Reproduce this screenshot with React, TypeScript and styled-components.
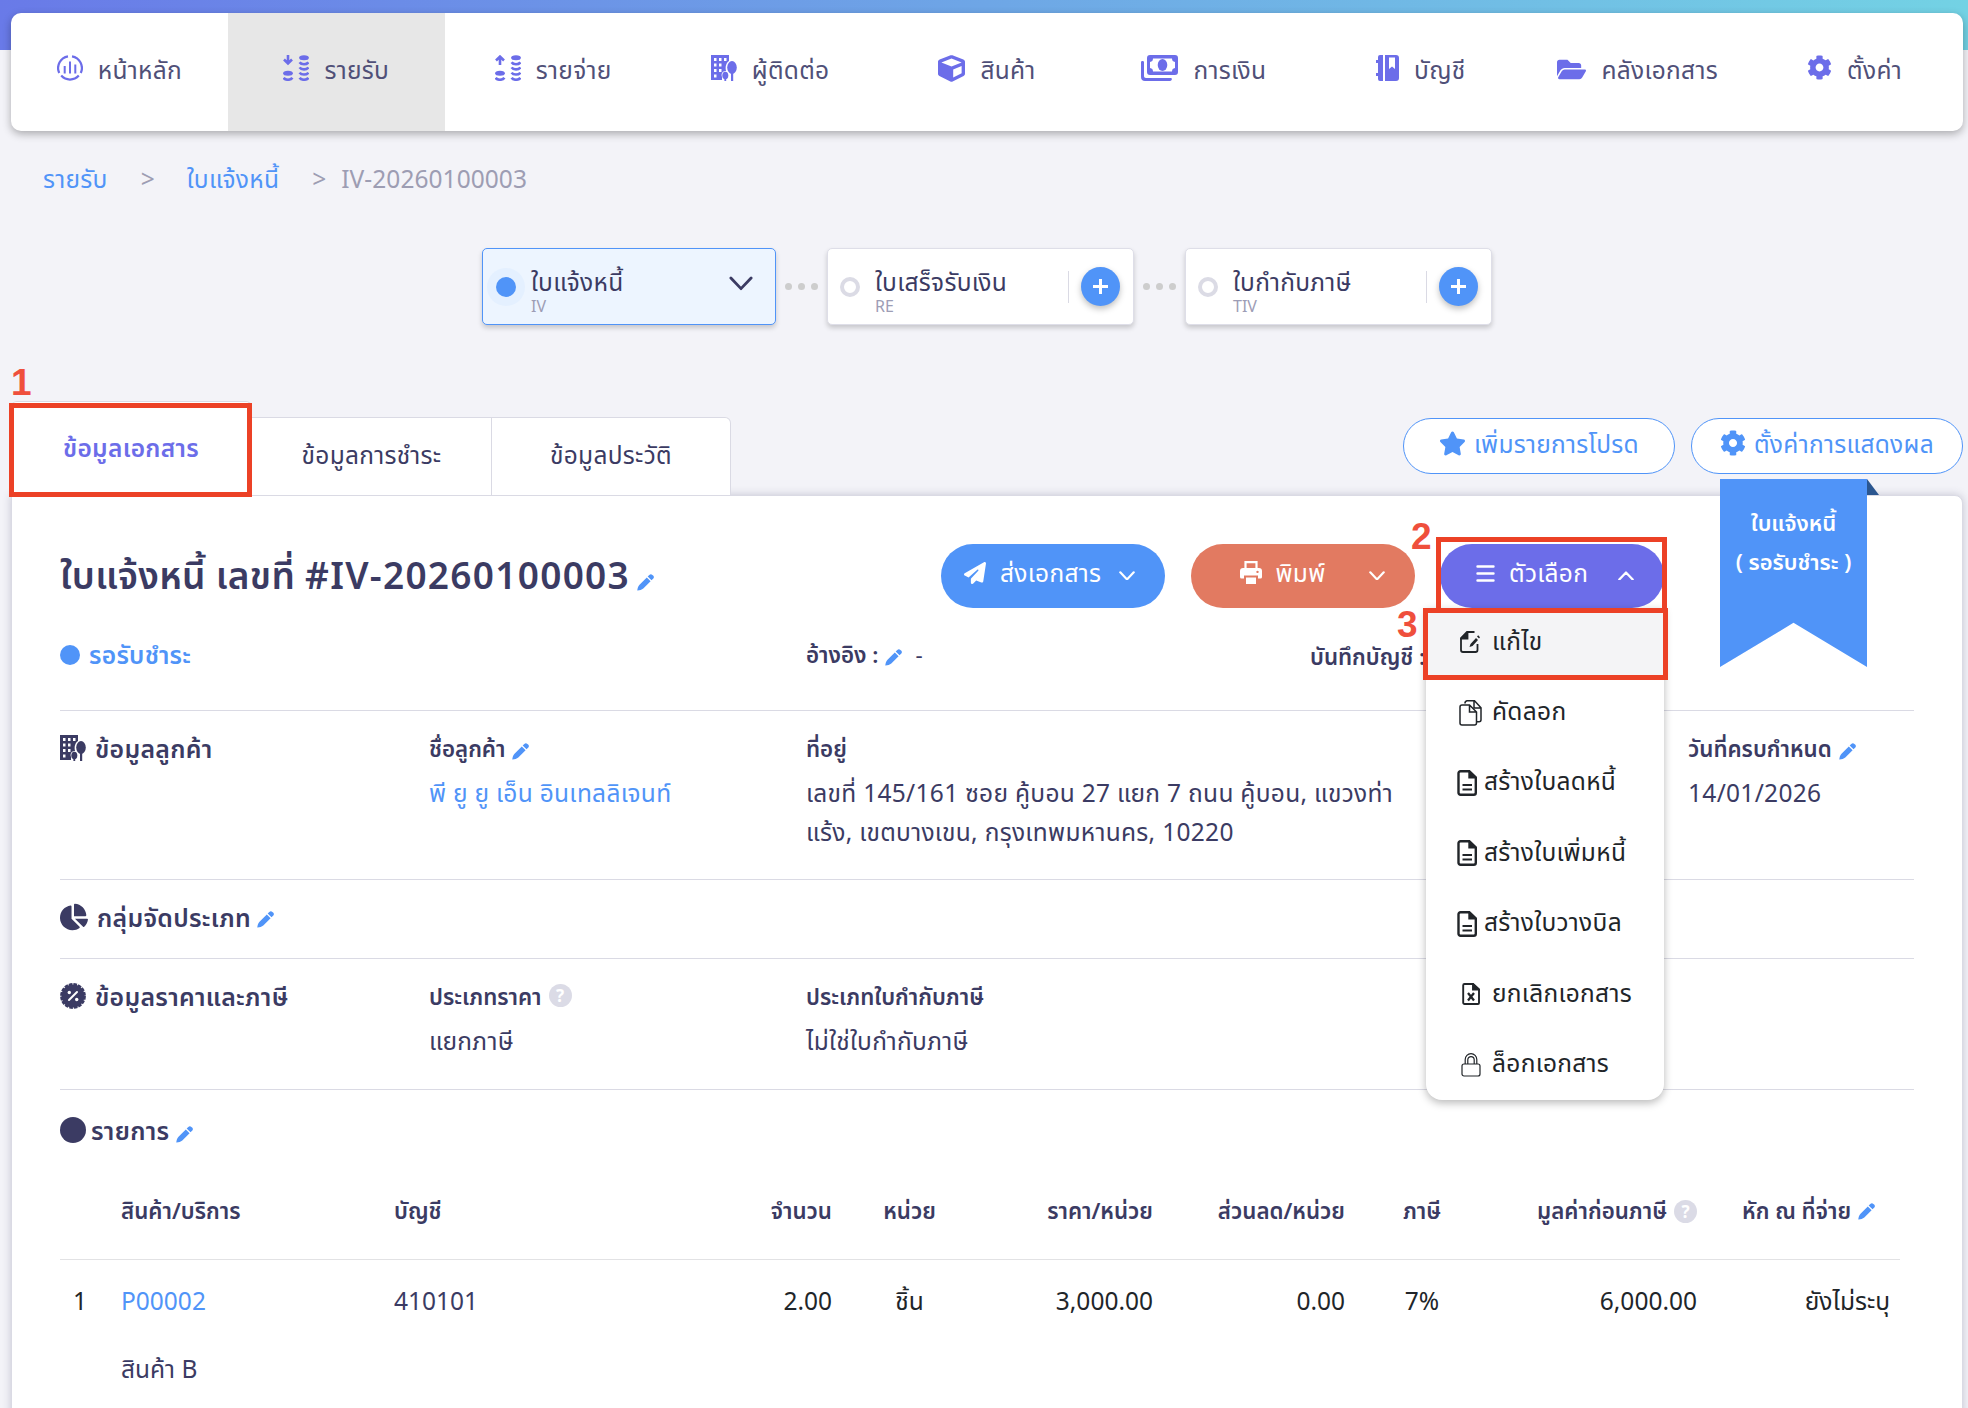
import React from 'react';
import styled, { createGlobalStyle } from 'styled-components';
import { FaChartPie, FaCog, FaCube, FaFolderOpen, FaStar } from 'react-icons/fa';
import { FaPaperPlane } from 'react-icons/fa6';

const NAVY = '#3b3b63';
const BLUE = '#5094f8';
const VIOLET = '#6c6de9';
const LINE = '#dadae4';
const RED = '#ec4126';

const DashboardIcon = () => (
  <svg width="26" height="26" viewBox="0 0 26 26" fill="none" stroke="currentColor" strokeWidth="2.2">
    <path d="M11 1.4A11.8 11.8 0 0 0 2.2 18M15 1.4A11.8 11.8 0 0 1 23.8 18M4.2 20.6a11.8 11.8 0 0 0 17.6 0" />
    <path d="M7.700 11v7.500M13 6.500V18.500M18.300 9.500V18.500" strokeWidth="2" />
  </svg>
);

const CoinsIcon = ({ up }: { up?: boolean }) => (
  <svg width="26" height="26" viewBox="0 0 26 26" fill="currentColor">
    <path
      d="M5 0v7M1 4.500 5 8.400 9 4.500"
      transform={up ? 'rotate(180 5 5)' : undefined}
      fill="none"
      stroke="currentColor"
      strokeWidth="2.6"
    />
    <ellipse cx="5" cy="18.2" rx="4.9" ry="2.5" />
    <ellipse cx="21" cy="2.8" rx="4.9" ry="2.5" />
    <path
      d="M.6 22.800c1.700 2.600 7.100 2.600 8.800 0M16.600 7.300c1.700 2.600 7.100 2.600 8.800 0M16.600 12.400c1.700 2.600 7.100 2.600 8.800 0M16.600 17.600c1.700 2.600 7.100 2.600 8.800 0M16.600 22.800c1.700 2.600 7.100 2.600 8.800 0"
      fill="none"
      stroke="currentColor"
      strokeWidth="2.6"
    />
  </svg>
);

const BuildingIcon = () => (
  <svg width="26" height="26" viewBox="0 0 26 26" fill="currentColor">
    <path
      fillRule="evenodd"
      d="M0 0h18v6c-3 2-4 6-3 10-4 0-5 3-4 6v3H0zM3 3v3h2.500V3zM8 3v3h2.500V3zM13 3v3h2.500V3zM3 8.500v3h2.500v-3zM8 8.500v3h2.500v-3zM3 14v3h2.500v-3zM8 14v3h2.500v-3zM3 19.500v3h2.500v-3z"
    />
    <ellipse cx="21" cy="12.5" rx="4.8" ry="6.5" />
    <ellipse cx="14.3" cy="20.5" rx="3" ry="3.8" />
    <path d="M20 17h2.200v9H20zM13.400 22h1.800v4h-1.800z" />
  </svg>
);

const MoneyIcon = () => (
  <svg width="37" height="26" viewBox="0 0 37 26" fill="currentColor">
    <path
      fillRule="evenodd"
      d="M9 0h25a3 3 0 0 1 3 3v14a3 3 0 0 1-3 3H9a3 3 0 0 1-3-3V3a3 3 0 0 1 3-3zM12 3.500a3.500 3.500 0 0 1-3 3.500v6a3.500 3.500 0 0 1 3 3.500h19a3.500 3.500 0 0 1 3-3.500V7a3.500 3.500 0 0 1-3-3.500z"
    />
    <ellipse cx="21.5" cy="10" rx="4.8" ry="6" />
    <path d="M0 7c0-1.500 3-1.500 3 0v14c0 1.300.8 2 2 2h25c1.500 0 1 3-1 3H4c-2.500 0-4-1.500-4-4z" />
  </svg>
);

const LedgerIcon = () => (
  <svg width="23" height="26" viewBox="0 0 23 26" fill="currentColor">
    <path d="M4 0h3v26H4a2 2 0 0 1-2-2v-3H0v-3h2V8H0V5h2V2a2 2 0 0 1 2-2z" />
    <path fillRule="evenodd" d="M9 0h11a3 3 0 0 1 3 3v20a3 3 0 0 1-3 3H9zm4 2.500V14l3-2.500 3 2.500V2.500z" />
  </svg>
);

const PercentIcon = () => (
  <svg width="26" height="26" viewBox="0 0 26 26" fill="currentColor">
    <circle cx="13" cy="13" r="11.5" />
    <circle cx="13" cy="13" r="11.7" fill="none" stroke="currentColor" strokeWidth="2.4" strokeDasharray="3.6 1" />
    <path d="M9 17 17 9" stroke="#fff" strokeWidth="2" strokeLinecap="round" />
    <circle cx="9.3" cy="9.5" r="1.7" fill="#fff" />
    <circle cx="16.7" cy="16.5" r="1.7" fill="#fff" />
  </svg>
);

const PrintIcon = () => (
  <svg width="22" height="24" viewBox="0 0 22 24" fill="currentColor">
    <path d="M5.500 8V1.200h11V8" fill="none" stroke="currentColor" strokeWidth="2.2" />
    <path
      fillRule="evenodd"
      d="M3 7h16a3 3 0 0 1 3 3v6a1.500 1.500 0 0 1-1.500 1.500H18V14.500H4v3H1.500A1.500 1.500 0 0 1 0 16v-6a3 3 0 0 1 3-3zm14.500 2.700a1.200 1.200 0 1 0 .01 0z"
    />
    <path d="M6 16.500h10V23H6z" />
  </svg>
);

const EditIcon = () => (
  <svg width="21" height="22" viewBox="0 0 21 22" fill="none" stroke="currentColor" strokeWidth="1.8">
    <path d="M14.500 1H7L1 7v12a2 2 0 0 0 2 2h12.500a2 2 0 0 0 2-2v-6" />
    <path d="M1.500 7.500H7.500V1.500z" fill="currentColor" />
    <path d="M9.500 16l1-3 5.500-6 2 2-5.500 6zM17 5.500l1.200-1.200 1.800 2L19 7.500z" fill="currentColor" stroke="none" />
  </svg>
);

const CopyIcon = () => (
  <svg width="23" height="26" viewBox="0 0 23 26" fill="none" stroke="currentColor" strokeWidth="1.5">
    <path d="M6 3.500a2.500 2.500 0 0 1 2-2.700h7.500l6.500 7v12a2 2 0 0 1-2 2h-2.500M15 1v7h7" />
    <path d="M3 5h7.500l7 7v11a2 2 0 0 1-2 2H3a2 2 0 0 1-2-2V7a2 2 0 0 1 2-2zM10.500 5v7H17.500" />
  </svg>
);

const FileIcon = () => (
  <svg width="20" height="26" viewBox="0 0 20 26" fill="none" stroke="currentColor" strokeWidth="2.4">
    <path d="M3.500 1.200H12l6.800 6.500v15.100a2 2 0 0 1-2 2H3.500a2 2 0 0 1-2-2V3.200a2 2 0 0 1 2-2z" />
    <path d="M12.500 1.500v5.700h6z" fill="currentColor" />
    <path d="M5.500 15h9.500M5.500 19.500h9.500" strokeWidth="2" />
  </svg>
);

const CancelIcon = () => (
  <svg width="18" height="22" viewBox="0 0 18 22" fill="none" stroke="currentColor" strokeWidth="1.9">
    <path d="M2.500 1H11l6 5.500V20a1 1 0 0 1-1 1H2.500a1.300 1.300 0 0 1-1.300-1.300V2.300A1.300 1.300 0 0 1 2.500 1z" />
    <path d="M11 1v5.500h6z" fill="currentColor" />
    <path d="m6 10 6 7.500M12 10l-6 7.500" strokeWidth="2.3" />
  </svg>
);

const LockIcon = () => (
  <svg width="20" height="24" viewBox="0 0 20 24" fill="none" stroke="currentColor" strokeWidth="1.2">
    <rect x="1" y="11" width="18" height="12" rx="2" />
    <path d="M4.200 11V6.500a5.800 5.800 0 0 1 11.600 0V11M6.800 11V6.800a3.200 3.200 0 0 1 6.400 0V11" />
  </svg>
);

const BarsIcon = () => (
  <svg width="19" height="17" viewBox="0 0 19 17" stroke="currentColor" strokeWidth="2.4" strokeLinecap="round">
    <path d="M1.500 1.500h16M1.500 8.500h16M1.500 15.500h16" />
  </svg>
);

const Pencil = () => (
  <svg className="pencil" width="17" height="17" viewBox="0 0 17 17" fill={BLUE}>
    <path d="M9.800 3.400l3.800 3.800-7.300 7.300c-1.500 1.300-3.600 1.800-5.700 2.100-.3 0-.4-.1-.3-.4.3-2 .8-4.100 2.200-5.500z" />
    <path d="M10.700 2.500 12.300.9a2.200 2.200 0 0 1 3.100 0l.7.7a2.200 2.200 0 0 1 0 3.100l-1.600 1.600z" />
  </svg>
);

const Chevron = ({ w = 16, up, thick = 2.2 }: { w?: number; up?: boolean; thick?: number }) => (
  <svg
    width={w}
    height={w * 0.62}
    viewBox="0 0 16 10"
    fill="none"
    stroke="currentColor"
    strokeWidth={thick}
    strokeLinecap="round"
    strokeLinejoin="round"
  >
    <path d={up ? 'M1.200 8.700 8 1.500l6.800 7.200' : 'M1.200 1.300 8 8.500l6.800-7.200'} />
  </svg>
);

const navItems = [
  { label: 'หน้าหลัก', icon: <DashboardIcon /> },
  { label: 'รายรับ', icon: <CoinsIcon />, active: true },
  { label: 'รายจ่าย', icon: <CoinsIcon up /> },
  { label: 'ผู้ติดต่อ', icon: <BuildingIcon /> },
  { label: 'สินค้า', icon: <FaCube size={27} /> },
  { label: 'การเงิน', icon: <MoneyIcon /> },
  { label: 'บัญชี', icon: <LedgerIcon /> },
  { label: 'คลังเอกสาร', icon: <FaFolderOpen size={29} /> },
  { label: 'ตั้งค่า', icon: <FaCog size={25} /> },
];

const menuItems = [
  { label: 'แก้ไข', icon: <EditIcon />, active: true },
  { label: 'คัดลอก', icon: <CopyIcon /> },
  { label: 'สร้างใบลดหนี้', icon: <FileIcon />, tight: true },
  { label: 'สร้างใบเพิ่มหนี้', icon: <FileIcon />, tight: true },
  { label: 'สร้างใบวางบิล', icon: <FileIcon />, tight: true },
  { label: 'ยกเลิกเอกสาร', icon: <CancelIcon /> },
  { label: 'ล็อกเอกสาร', icon: <LockIcon /> },
];

const steps = [
  { label: 'ใบเสร็จรับเงิน', code: 'RE' },
  { label: 'ใบกำกับภาษี', code: 'TIV' },
];

function App() {
  return (
    <Page>
      <GlobalStyle />
      <Nav>
        {navItems.map((item) => (
          <NavItem key={item.label} $active={item.active}>
            {item.icon}
            <span>{item.label}</span>
          </NavItem>
        ))}
      </Nav>

      <Breadcrumb>
        <Link>รายรับ</Link>
        <Arrow>&gt;</Arrow>
        <Link>ใบแจ้งหนี้</Link>
        <Arrow $last>&gt;</Arrow>
        <Current>IV-20260100003</Current>
      </Breadcrumb>

      <Steps>
        <Step $active>
          <Radio $active />
          <StepText>
            ใบแจ้งหนี้
            <small>IV</small>
          </StepText>
          <StepChevron>
            <Chevron w={24} thick={1.9} />
          </StepChevron>
        </Step>
        {steps.map((step) => (
          <React.Fragment key={step.code}>
            <Dots>
              <i />
              <i />
              <i />
            </Dots>
            <Step>
              <Radio />
              <StepText>
                {step.label}
                <small>{step.code}</small>
              </StepText>
              <AddBox>
                <AddButton />
              </AddBox>
            </Step>
          </React.Fragment>
        ))}
      </Steps>

      <TabBar>
        <Tab $active>
          ข้อมูลเอกสาร
          <Frame $x={-2} $y={1} $w={243} $h={94} />
          <Mark $x={0} $y={-36}>
            1
          </Mark>
        </Tab>
        <Tab>ข้อมูลการชำระ</Tab>
        <Tab $end>ข้อมูลประวัติ</Tab>
        <TabActions>
          <OutlineButton>
            <FaStar size={27} />
            <span>เพิ่มรายการโปรด</span>
          </OutlineButton>
          <OutlineButton>
            <FaCog size={26} />
            <span>ตั้งค่าการแสดงผล</span>
          </OutlineButton>
        </TabActions>
      </TabBar>

      <Panel>
        <Ribbon>
          ใบแจ้งหนี้
          <br />( รอรับชำระ )
        </Ribbon>
        <RibbonFold />
        <Head>
          <Title>
            ใบแจ้งหนี้ เลขที่ <span>#IV-20260100003</span>
          </Title>
          <Pencil />
          <Actions>
            <ActionButton $color={BLUE}>
              <FaPaperPlane size={22} />
              <span>ส่งเอกสาร</span>
              <Chevron />
            </ActionButton>
            <ActionButton $color="#e27a61" $spread>
              <PrintIcon />
              <span>พิมพ์</span>
              <Chevron />
            </ActionButton>
            <MenuHost>
              <ActionButton $color={VIOLET} $menu>
                <BarsIcon />
                <span>ตัวเลือก</span>
                <Chevron up />
              </ActionButton>
              <Menu>
                {menuItems.map((item) => (
                  <MenuItem key={item.label} $active={item.active} $tight={item.tight}>
                    <MenuIcon $tight={item.tight}>{item.icon}</MenuIcon>
                    {item.label}
                  </MenuItem>
                ))}
              </Menu>
              <Frame $x={-4} $y={-7} $w={231} $h={76} />
              <Frame $x={-17} $y={64} $w={245} $h={72} />
              <Mark $x={-29} $y={-24}>
                2
              </Mark>
              <Mark $x={-43} $y={64}>
                3
              </Mark>
            </MenuHost>
          </Actions>
        </Head>

        <StatusRow>
          <Status>รอรับชำระ</Status>
          <Label>
            อ้างอิง : <Pencil />
            <Dash>-</Dash>
          </Label>
          <Label $low>บันทึกบัญชี :</Label>
        </StatusRow>

        <Section $height={169}>
          <SectionTitle>
            <BuildingIcon />
            ข้อมูลลูกค้า
          </SectionTitle>
          <Field>
            <Label>
              ชื่อลูกค้า <Pencil />
            </Label>
            <Value $link>พี ยู ยู เอ็น อินเทลลิเจนท์</Value>
          </Field>
          <Field>
            <Label>ที่อยู่</Label>
            <Value>
              เลขที่ 145/161 ซอย คู้บอน 27 แยก 7 ถนน คู้บอน, แขวงท่า
              <br />
              แร้ง, เขตบางเขน, กรุงเทพมหานคร, 10220
            </Value>
          </Field>
          <Field>
            <Label>
              วันที่ครบกำหนด <Pencil />
            </Label>
            <Value>14/01/2026</Value>
          </Field>
        </Section>

        <Section $height={79}>
          <SectionTitle>
            <FaChartPie size={28} />
            กลุ่มจัดประเภท <Pencil />
          </SectionTitle>
        </Section>

        <Section $height={131}>
          <SectionTitle>
            <PercentIcon />
            ข้อมูลราคาและภาษี
          </SectionTitle>
          <Field>
            <Label>
              ประเภทราคา <Help $raised>?</Help>
            </Label>
            <Value>แยกภาษี</Value>
          </Field>
          <Field>
            <Label>ประเภทใบกำกับภาษี</Label>
            <Value>ไม่ใช่ใบกำกับภาษี</Value>
          </Field>
        </Section>

        <Section $height={100}>
          <SectionTitle $items>
            <Disc />
            รายการ <Pencil />
          </SectionTitle>
        </Section>

        <Table>
          <thead>
            <tr>
              <th />
              <th>สินค้า/บริการ</th>
              <th>บัญชี</th>
              <Right as="th">จำนวน</Right>
              <Center as="th">หน่วย</Center>
              <Right as="th">ราคา/หน่วย</Right>
              <Right as="th">ส่วนลด/หน่วย</Right>
              <Center as="th">ภาษี</Center>
              <Right as="th">
                <Inline>
                  มูลค่าก่อนภาษี <Help>?</Help>
                </Inline>
              </Right>
              <Right as="th">
                <Inline $pad={25}>
                  หัก ณ ที่จ่าย <Pencil />
                </Inline>
              </Right>
            </tr>
          </thead>
          <tbody>
            <tr>
              <Index>1</Index>
              <td>
                <Link>P00002</Link>
                <ProductName>สินค้า B</ProductName>
              </td>
              <td>410101</td>
              <Right>2.00</Right>
              <Center>ชิ้น</Center>
              <Right>3,000.00</Right>
              <Right>0.00</Right>
              <Center>7%</Center>
              <Right>6,000.00</Right>
              <Right $pad={10}>ยังไม่ระบุ</Right>
            </tr>
          </tbody>
        </Table>
      </Panel>
    </Page>
  );
}

const GlobalStyle = createGlobalStyle`
  * {
    box-sizing: border-box;
  }
  body {
    margin: 0;
    overflow: hidden;
    font-family: 'Noto Sans', 'Noto Sans Thai', 'Noto Sans Thai UI', sans-serif;
    font-size: 24.5px;
    line-height: 30px;
    letter-spacing: 0.3px;
    color: ${NAVY};
    white-space: nowrap;
  }
  svg {
    flex: none;
    display: block;
  }
`;
const Page = styled.div`
  width: 1968px;
  height: 1408px;
  overflow: hidden;
  padding: 13px 5px 0 11px;
  background: linear-gradient(88deg, #697ae8, #73d2e4) top / 100% 50px no-repeat, #f3f3f8;
`;
const Nav = styled.nav`
  display: flex;
  height: 118px;
  border-radius: 10px;
  background: #fff;
  box-shadow: 0 3px 8px rgba(0, 0, 0, 0.3);
`;
const NavItem = styled.div<{ $active?: boolean }>`
  flex: 1;
  display: flex;
  justify-content: center;
  align-items: flex-start;
  gap: 15px;
  padding-top: 42px;
  color: ${VIOLET};
  background: ${({ $active }) => ($active ? '#e7e7e7' : 'none')};

  span {
    color: #505078;
  }
`;
const Breadcrumb = styled.div`
  display: flex;
  margin-top: 33px;
  padding-left: 32px;
  height: 30px;
  color: #9d9db3;
`;
const Link = styled.span`
  color: ${BLUE};
`;
const Arrow = styled.span<{ $last?: boolean }>`
  width: 14px;
  margin: 0 ${({ $last }) => ($last ? 15 : 32)}px 0 33px;
`;
const Current = styled.span`
  letter-spacing: 0.05px;
`;
const Steps = styled.div`
  display: flex;
  margin-top: 54px;
  padding-left: 471px;
  height: 77px;
`;
const Step = styled.div<{ $active?: boolean }>`
  display: flex;
  align-items: center;
  width: ${({ $active }) => ($active ? 294 : 307)}px;
  padding: 0 13px 0 ${({ $active }) => ($active ? 13 : 12)}px;
  border: 1px solid ${({ $active }) => ($active ? BLUE : '#dedee8')};
  border-radius: 5px;
  background: ${({ $active }) => ($active ? '#edf5ff' : '#fff')};
  box-shadow: 0 3px 5px rgba(0, 0, 0, 0.18);
`;
const Radio = styled.i<{ $active?: boolean }>`
  width: 20px;
  height: 20px;
  border-radius: 50%;
  background: ${({ $active }) => ($active ? BLUE : 'none')};
  border: ${({ $active }) => ($active ? 'none' : '4px solid #dbdbe5')};
  box-shadow: ${({ $active }) => ($active ? '0 0 0 9px #e4f0ff' : 'none')};
`;
const StepText = styled.div`
  flex: 1;
  margin-left: 15px;
  padding-top: 9px;

  small {
    display: block;
    font-size: 16px;
    line-height: 18px;
    letter-spacing: 0;
    color: #9d9db5;
  }
`;
const StepChevron = styled.div`
  padding: 0 9px 6px 0;
`;
const Dots = styled.div`
  display: flex;
  align-items: center;
  justify-content: center;
  gap: 6px;
  width: 51px;

  i {
    width: 7px;
    height: 7px;
    border-radius: 50%;
    background: #cdcdcd;
  }
`;
const AddBox = styled.div`
  display: flex;
  align-items: center;
  height: 32px;
  padding-left: 12px;
  border-left: 1px solid ${LINE};
`;
const AddButton = styled.i`
  width: 39px;
  height: 39px;
  border-radius: 50%;
  background: linear-gradient(#fff, #fff) center / 15px 3px no-repeat,
    linear-gradient(#fff, #fff) center / 3px 15px no-repeat, ${BLUE};
  box-shadow: 0 3px 6px rgba(0, 0, 0, 0.25);
`;
const TabBar = styled.div`
  display: flex;
  align-items: flex-end;
  height: 95px;
  margin-top: 76px;
  position: relative;
  z-index: 2;
`;
const Tab = styled.div<{ $active?: boolean; $end?: boolean }>`
  position: relative;
  display: flex;
  align-items: center;
  justify-content: center;
  width: ${({ $active, $end }) => ($active ? 241 : $end ? 239 : 240)}px;
  height: ${({ $active }) => ($active ? 95 : 79)}px;
  padding-bottom: ${({ $active }) => ($active ? 1 : 4)}px;
  color: ${({ $active }) => ($active ? VIOLET : NAVY)};
  font-weight: ${({ $active }) => ($active ? 600 : 400)};
  background: #fff;
  border: 1px solid ${LINE};
  border-left-width: 0;
  border-radius: ${({ $active, $end }) => ($active ? '6px 6px 0 0' : $end ? '0 6px 0 0' : '0')};
`;
const Frame = styled.div<{ $x: number; $y: number; $w: number; $h: number }>`
  position: absolute;
  left: ${({ $x }) => $x}px;
  top: ${({ $y }) => $y}px;
  width: ${({ $w }) => $w}px;
  height: ${({ $h }) => $h}px;
  border: 5px solid ${RED};
  z-index: 4;
`;
const Mark = styled.b<{ $x: number; $y: number }>`
  position: absolute;
  left: ${({ $x }) => $x}px;
  top: ${({ $y }) => $y}px;
  font: 700 37px/34px 'Liberation Sans', sans-serif;
  letter-spacing: 0;
  color: #ef4f3c;
  z-index: 5;
`;
const TabActions = styled.div`
  display: flex;
  gap: 16px;
  margin-left: auto;
  padding-bottom: 22px;
`;
const OutlineButton = styled.div`
  display: flex;
  justify-content: center;
  gap: 8px;
  width: 272px;
  height: 56px;
  padding-top: 11px;
  border: 1px solid ${BLUE};
  border-radius: 28px;
  background: #fff;
  color: ${BLUE};

  span {
    line-height: 28px;
  }
`;
const Panel = styled.main`
  position: relative;
  height: 940px;
  margin-top: -1px;
  padding: 48px 48px 0;
  background: #fff;
  border: 1px solid ${LINE};
  border-radius: 0 8px 0 0;
  box-shadow: 0 0 9px rgba(60, 60, 100, 0.25);
`;
const Ribbon = styled.div`
  position: absolute;
  left: 1708px;
  top: -17px;
  width: 147px;
  height: 188px;
  padding-top: 24px;
  text-align: center;
  font-size: 22px;
  line-height: 39px;
  font-weight: 600;
  letter-spacing: 0;
  color: #fff;
  background: ${BLUE};
  clip-path: polygon(0 0, 100% 0, 100% 100%, 50% 76.5%, 0 100%);
  z-index: 3;
`;
const RibbonFold = styled.i`
  position: absolute;
  left: 1855px;
  top: -17px;
  width: 12px;
  height: 16px;
  background: #2b568f;
  clip-path: polygon(0 0, 100% 100%, 0 100%);
`;
const Head = styled.div`
  display: flex;
  align-items: center;
  height: 64px;

  > .pencil {
    margin-top: 12px;
  }
`;
const Title = styled.h1`
  margin: 0 7px 2px 0;
  font-size: 37px;
  line-height: 50px;
  font-weight: 600;

  span {
    letter-spacing: 1.3px;
  }
`;
const Actions = styled.div`
  display: flex;
  gap: 25.5px;
  margin: 0 250px 0 auto;
`;
const MenuHost = styled.div`
  position: relative;
`;
const ActionButton = styled.div<{ $color: string; $spread?: boolean; $menu?: boolean }>`
  display: flex;
  align-items: center;
  width: 224px;
  height: 64px;
  padding: 0 30px 6px ${({ $spread, $menu }) => ($spread ? 49 : $menu ? 36 : 23)}px;
  border-radius: 32px;
  color: #fff;
  background: ${({ $color }) => $color};

  span {
    margin-left: 14px;
  }
  svg:last-child {
    margin: 5px 0 0 auto;
  }
`;
const Menu = styled.div`
  position: absolute;
  left: -14px;
  top: 64px;
  width: 238px;
  height: 492px;
  border-radius: 0 0 16px 16px;
  background: #fff;
  box-shadow: 0 3px 8px rgba(0, 0, 0, 0.28);
  overflow: hidden;
  z-index: 3;
`;
const MenuItem = styled.div<{ $active?: boolean; $tight?: boolean }>`
  display: flex;
  align-items: center;
  gap: ${({ $tight }) => ($tight ? 7 : 10)}px;
  height: 70.4px;
  padding: 0 0 5px ${({ $tight }) => ($tight ? 31 : 33)}px;
  color: #212529;
  background: ${({ $active }) => ($active ? '#f4f4f6' : 'none')};
`;
const MenuIcon = styled.span<{ $tight?: boolean }>`
  display: flex;
  justify-content: center;
  min-width: ${({ $tight }) => ($tight ? 20 : 23)}px;
  padding-top: 3px;
`;
const StatusRow = styled.div`
  display: grid;
  grid-template-columns: 746px 504px 120px;
  height: 102px;
  padding-top: 32px;
`;
const Status = styled.div`
  display: flex;
  align-items: center;
  gap: 9px;
  height: 30px;
  font-weight: 600;
  color: ${BLUE};

  &::before {
    content: '';
    width: 20px;
    height: 20px;
    border-radius: 50%;
    background: ${BLUE};
  }
`;
const Label = styled.div<{ $low?: boolean }>`
  display: flex;
  align-items: center;
  gap: 7px;
  height: 30px;
  margin-top: ${({ $low }) => ($low ? 2 : 0)}px;
  font-size: 22.3px;
  font-weight: 600;
  letter-spacing: 0;

  .pencil {
    margin-top: 4px;
  }
`;
const Dash = styled.span`
  margin-left: 6px;
  font-weight: 400;
`;
const Section = styled.section<{ $height: number }>`
  display: grid;
  grid-template-columns: 369px 377px 882px auto;
  width: 1854px;
  height: ${({ $height }) => $height}px;
  padding-top: 22px;
  border-top: 1px solid ${LINE};
`;
const SectionTitle = styled.div<{ $items?: boolean }>`
  display: flex;
  align-items: center;
  gap: ${({ $items }) => ($items ? 5 : 9)}px;
  height: 30px;
  margin-top: ${({ $items }) => ($items ? 3 : 0)}px;
  font-size: 24.8px;
  font-weight: 600;

  .pencil {
    margin: ${({ $items }) => ($items ? '9px 0 0 2px' : '5px 0 0 -3px')};
  }
`;
const Field = styled.div`
  padding-top: 1px;
`;
const Value = styled.div<{ $link?: boolean }>`
  margin-top: 9px;
  line-height: 39px;
  color: ${({ $link }) => ($link ? BLUE : NAVY)};
`;
const Help = styled.i<{ $raised?: boolean }>`
  width: 23px;
  height: 23px;
  margin-top: ${({ $raised }) => ($raised ? -3 : 0)}px;
  border-radius: 50%;
  background: #dbdbe6;
  color: #fff;
  text-align: center;
  font: 700 17px/23px 'Noto Sans', sans-serif;
`;
const Disc = styled.i`
  width: 26px;
  height: 26px;
  border-radius: 50%;
  background: ${NAVY};
`;
const Table = styled.table`
  table-layout: fixed;
  width: 1840px;
  border-collapse: collapse;

  th {
    height: 70px;
    padding: 0 0 25px;
    font-size: 22.3px;
    font-weight: 600;
    letter-spacing: 0;
    text-align: left;
    border-bottom: 1px solid #e2e2e4;
  }
  th:nth-child(1) { width: 61px; }
  th:nth-child(2) { width: 273px; }
  th:nth-child(3) { width: 240px; }
  th:nth-child(4) { width: 198px; }
  th:nth-child(5) { width: 155px; }
  th:nth-child(6) { width: 166px; }
  th:nth-child(7) { width: 192px; }
  th:nth-child(8) { width: 154px; }
  th:nth-child(9) { width: 198px; }
  th:nth-child(10) { width: 203px; }
  td {
    padding: 26px 0 0;
    vertical-align: top;
    letter-spacing: 0;
  }
`;
const Right = styled.td<{ $pad?: number }>`
  && {
    text-align: right;
    padding-right: ${({ $pad }) => $pad || 0}px;
  }
  tbody && {
    color: #212529;
  }
`;
const Center = styled(Right)`
  &&& {
    text-align: center;
  }
`;
const Index = styled.td`
  color: #212529;
  text-indent: 13px;
`;
const ProductName = styled.div`
  margin-top: 38px;
`;
const Inline = styled.div<{ $pad?: number }>`
  display: flex;
  align-items: center;
  justify-content: flex-end;
  gap: 7px;
  padding-right: ${({ $pad }) => $pad || 0}px;
`;

export default App;
